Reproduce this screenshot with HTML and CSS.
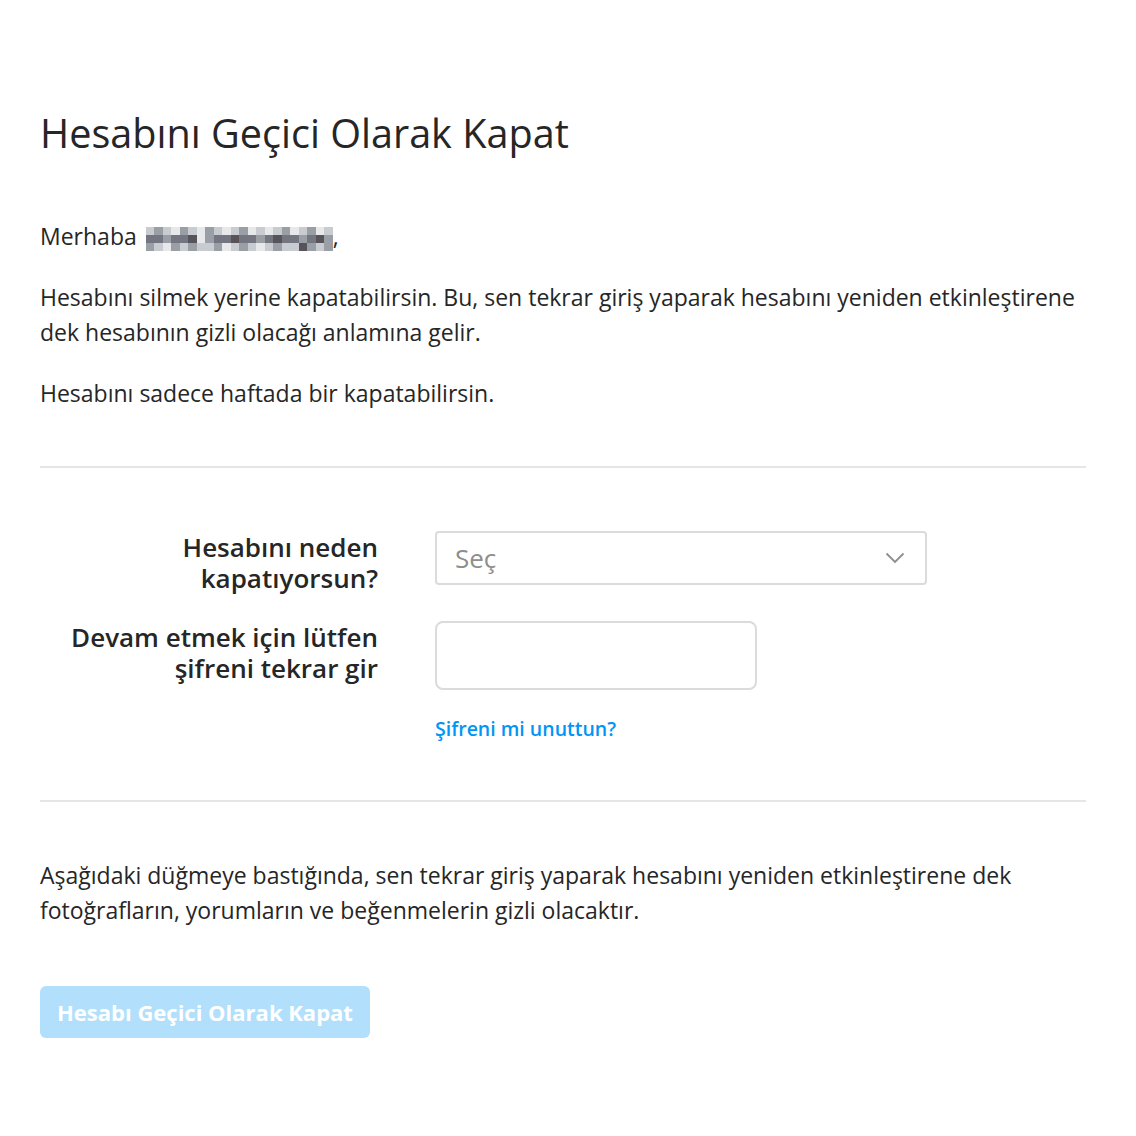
FILE: index.html
```html
<!DOCTYPE html>
<html lang="tr">
<head>
    <meta charset="UTF-8">
    <title>Hesabını Geçici Olarak Kapat</title>
    <link rel="stylesheet" href="styles.css">
</head>
<body>
    <div class="page">
        <h1 class="title">Hesabını Geçici Olarak Kapat</h1>

        <p class="greeting">Merhaba <span class="blur">
            <i class="l"></i><i class="m"></i><i class="l"></i><i class="w"></i><i class="m"></i><i class="l"></i><i class="w"></i><i class="m"></i><i class="l"></i><i class="w"></i><i class="l"></i><i class="m"></i><i class="w"></i><i class="l"></i><i class="w"></i><i class="l"></i><i class="m"></i><i class="w"></i><i class="l"></i><i class="m"></i><i class="w"></i><i class="l"></i>
            <i class="d"></i><i class="d"></i><i class="m"></i><i class="d"></i><i class="d"></i><i class="k"></i><i class="w"></i><i class="m"></i><i class="d"></i><i class="d"></i><i class="k"></i><i class="d"></i><i class="d"></i><i class="m"></i><i class="d"></i><i class="k"></i><i class="d"></i><i class="d"></i><i class="m"></i><i class="d"></i><i class="k"></i><i class="m"></i>
            <i class="m"></i><i class="l"></i><i class="w"></i><i class="m"></i><i class="l"></i><i class="m"></i><i class="l"></i><i class="l"></i><i class="m"></i><i class="w"></i><i class="l"></i><i class="m"></i><i class="l"></i><i class="w"></i><i class="l"></i><i class="m"></i><i class="l"></i><i class="l"></i><i class="k"></i><i class="m"></i><i class="l"></i><i class="m"></i>
        </span>,</p>

        <p class="text">Hesabını silmek yerine kapatabilirsin. Bu, sen tekrar giriş yaparak hesabını yeniden etkinleştirene dek hesabının gizli olacağı anlamına gelir.</p>
        <p class="text">Hesabını sadece haftada bir kapatabilirsin.</p>

        <hr class="divider">

        <form class="form">
            <label class="form-label" for="reason">Hesabını neden kapatıyorsun?</label>
            <div class="select" id="reason">
                <span class="select-value">Seç</span>
                <svg class="chevron" width="20" height="12" viewBox="0 0 20 12">
                    <path d="M1.5 1.5 L10 10 L18.5 1.5" fill="none" stroke="#8e8e8e" stroke-width="1.8"/>
                </svg>
            </div>

            <label class="form-label" for="password">Devam etmek için lütfen şifreni tekrar gir</label>
            <div class="field">
                <input class="password" id="password" type="password">
                <a class="forgot" href="#">Şifreni mi unuttun?</a>
            </div>
        </form>

        <hr class="divider">

        <p class="text notice">Aşağıdaki düğmeye bastığında, sen tekrar giriş yaparak hesabını yeniden etkinleştirene dek fotoğrafların, yorumların ve beğenmelerin gizli olacaktır.</p>

        <button class="submit" disabled>Hesabı Geçici Olarak Kapat</button>
    </div>
</body>
</html>
```

FILE: styles.css
```css
body {
    margin: 0;
    background: #fff;
    color: #262626;
    font-family: "Open Sans", "Noto Sans", sans-serif;
}
.page {
    width: 1046px;
    padding: 110px 0 0 40px;
}
.title {
    margin: 0;
    font-size: 39.6px;
    font-weight: 400;
    line-height: 46px;
}
.greeting, .text {
    margin: 0;
    font-size: 23px;
    line-height: 35px;
}
.greeting {
    margin-top: 63px;
}
.text {
    margin-top: 26px;
}
.blur {
    display: inline-grid;
    grid-template-columns: repeat(22, 8.5px);
    grid-auto-rows: 8px;
    vertical-align: middle;
    margin-left: 3px;
}
.blur i { display: block; }
.blur .w { background: #e6e8ea; }
.blur .l { background: #c8cbcf; }
.blur .m { background: #9a9fa6; }
.blur .d { background: #737680; }
.blur .k { background: #57535a; }
.divider {
    border: none;
    height: 2px;
    background: #e6e6e6;
    margin: 55px 0 0;
}
.form {
    display: grid;
    grid-template-columns: 338px 1fr;
    align-items: start;
    column-gap: 57px;
    row-gap: 27px;
    margin-top: 63px;
    padding-bottom: 2px;
}
.form-label {
    text-align: right;
    font-size: 26px;
    font-weight: 600;
    line-height: 31px;
    padding-top: 1px;
}
.select {
    width: 492px;
    height: 54px;
    box-sizing: border-box;
    border: 2px solid #dbdbdb;
    border-radius: 4px;
    display: flex;
    align-items: center;
    justify-content: space-between;
    padding: 0 20px 0 18px;
}
.select-value {
    font-size: 26px;
    color: #8e8e8e;
}
.field {
    display: flex;
    flex-direction: column;
    align-items: flex-start;
}
.password {
    width: 322px;
    height: 69px;
    box-sizing: border-box;
    border: 2px solid #dbdbdb;
    border-radius: 8px;
    outline: none;
}
.forgot {
    margin-top: 25px;
    font-size: 19.5px;
    font-weight: 600;
    line-height: 28px;
    color: #0095f6;
    text-decoration: none;
}
.notice {
    margin-top: 56px;
}
.submit {
    margin-top: 58px;
    height: 52px;
    padding: 0 17px;
    border: none;
    border-radius: 6px;
    background: #b2dffc;
    color: #fff;
    font-family: inherit;
    font-size: 22px;
    font-weight: 700;
}
```
